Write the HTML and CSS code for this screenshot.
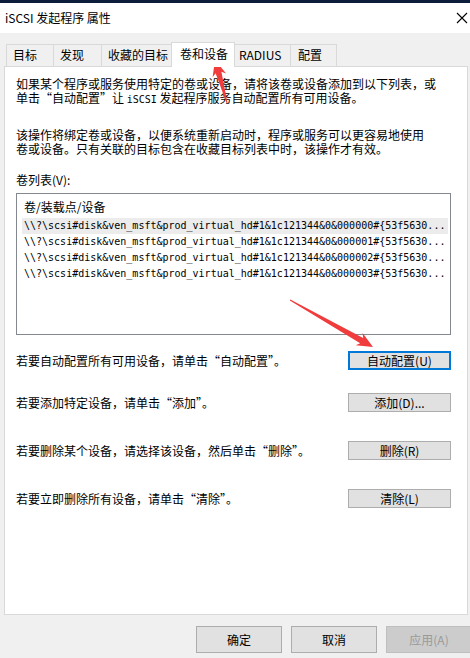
FILE: index.html
```html
<!DOCTYPE html>
<html lang="zh-CN">
<head>
    <meta charset="UTF-8">
    <title>iSCSI 发起程序 属性</title>
    <link rel="stylesheet" href="styles.css">
</head>
<body>
    <div class="window">
        <div class="topline"></div>
        <div class="titlebar">
            <span class="title">iSCSI 发起程序 属性</span>
            <svg class="close" width="12" height="12" viewBox="0 0 12 12">
                <path d="M1 1L11 11M11 1L1 11" stroke="#000" stroke-width="1.1" fill="none"/>
            </svg>
        </div>

        <div class="tabs">
            <div class="tab t1">目标</div>
            <div class="tab t2">发现</div>
            <div class="tab t3">收藏的目标</div>
            <div class="tab active">卷和设备</div>
            <div class="tab t5">RADIUS</div>
            <div class="tab t6">配置</div>
        </div>

        <div class="panel">
            <p class="para">如果某个程序或服务使用特定的卷或设备，请将该卷或设备添加到以下列表，或<br>单击“自动配置”让 <span class="mono">iSCSI</span> 发起程序服务自动配置所有可用设备。</p>
            <p class="para">该操作将绑定卷或设备，以便系统重新启动时，程序或服务可以更容易地使用<br>卷或设备。只有关联的目标包含在收藏目标列表中时，该操作才有效。</p>
            <div class="label">卷列表(V):</div>
            <div class="listbox">
                <div class="list-head">卷/装载点/设备</div>
                <div class="list-row selected">\\?\scsi#disk&amp;ven_msft&amp;prod_virtual_hd#1&amp;1c121344&amp;0&amp;000000#{53f5630...</div>
                <div class="list-row">\\?\scsi#disk&amp;ven_msft&amp;prod_virtual_hd#1&amp;1c121344&amp;0&amp;000001#{53f5630...</div>
                <div class="list-row">\\?\scsi#disk&amp;ven_msft&amp;prod_virtual_hd#1&amp;1c121344&amp;0&amp;000002#{53f5630...</div>
                <div class="list-row">\\?\scsi#disk&amp;ven_msft&amp;prod_virtual_hd#1&amp;1c121344&amp;0&amp;000003#{53f5630...</div>
            </div>

            <div class="action first">
                <span>若要自动配置所有可用设备，请单击“自动配置”。</span>
                <button class="btn focused">自动配置(U)</button>
            </div>
            <div class="action">
                <span>若要添加特定设备，请单击“添加”。</span>
                <button class="btn">添加(D)...</button>
            </div>
            <div class="action wide">
                <span>若要删除某个设备，请选择该设备，然后单击“删除”。</span>
                <button class="btn">删除(R)</button>
            </div>
            <div class="action wide">
                <span>若要立即删除所有设备，请单击“清除”。</span>
                <button class="btn">清除(L)</button>
            </div>
        </div>

        <div class="footer">
            <button class="dlg-btn">确定</button>
            <button class="dlg-btn">取消</button>
            <button class="dlg-btn disabled">应用(A)</button>
        </div>
    </div>

    <svg class="annot" width="470" height="658" viewBox="0 0 470 658">
        <polygon fill="#f03c3c" points="227.5,102.9 221.4,71.7 226.1,73.5 215,60 212.6,77.3 215.6,73.3 226.5,103.1"/>
        <polygon fill="#f03c3c" points="289.8,300.4 360.2,343.2 355.7,345.2 373,347 362.6,333 363.2,338 290.3,299.6"/>
    </svg>
</body>
</html>
```

FILE: styles.css
```css
body {
    margin: 0;
    padding: 0;
    background: #f0f0f0;
    font-family: "Noto Sans CJK SC", "Noto Sans", sans-serif;
    font-size: 12px;
    color: #000;
    overflow: hidden;
    width: 470px;
    height: 658px;
}
.window {
    width: 480px;
}
.topline {
    height: 3px;
    background: #0b1d3a;
}
.titlebar {
    height: 30px;
    background: #fff;
    display: flex;
    align-items: center;
    justify-content: space-between;
    padding: 0 2px 0 5px;
    width: 463px;
}
.title {
    font-size: 12px;
    line-height: 14px;
}
.tabs {
    display: flex;
    align-items: flex-end;
    padding-left: 6px;
    margin-top: 9px;
    height: 24px;
    position: relative;
    z-index: 1;
}
.tab {
    box-sizing: border-box;
    height: 22px;
    line-height: 20px;
    padding-left: 6px;
    border: 1px solid #d9d9d9;
    border-bottom: none;
    background: #f0f0f0;
    margin-right: -1px;
    white-space: nowrap;
}
.t1 { width: 48px; }
.t2 { width: 49px; }
.t3 { width: 73px; }
.t5 { width: 58px; padding-left: 5px; }
.t6 { width: 47px; padding-left: 7px; }
.tab.active {
    width: 64px;
    height: 25px;
    line-height: 22px;
    background: #fff;
    margin: 0 -2px -1px -2px;
    padding-left: 8px;
    position: relative;
    z-index: 2;
}
.panel {
    box-sizing: border-box;
    width: 464px;
    height: 549px;
    margin-left: 4px;
    background: #fff;
    border: 1px solid #d9d9d9;
    padding: 10px 0 0 11px;
}
.para {
    margin: 0 0 21px;
    line-height: 14px;
    white-space: nowrap;
}
.para + .para {
    margin-bottom: 17px;
}
.mono {
    font-family: "DejaVu Sans Mono", monospace;
    font-size: 10px;
}
.label {
    line-height: 14px;
    margin-bottom: 6px;
}
.listbox {
    box-sizing: border-box;
    width: 435px;
    height: 142px;
    border: 1px solid #828790;
    padding: 2px 2px 0 5px;
}
.list-head {
    height: 22px;
    line-height: 21px;
    padding-left: 2px;
}
.list-row {
    height: 16px;
    line-height: 16px;
    padding-left: 2px;
    font-family: "DejaVu Sans Mono", monospace;
    font-size: 10px;
    white-space: nowrap;
    overflow: hidden;
}
.list-row.selected {
    background: #ececec;
}
.action {
    display: flex;
    align-items: center;
    justify-content: space-between;
    width: 435px;
    height: 19px;
    margin-top: 23px;
}
.action.first {
    margin-top: 16px;
}
.action.wide {
    margin-top: 29px;
}
.btn {
    box-sizing: border-box;
    width: 103px;
    height: 19px;
    background: #e1e1e1;
    border: 1px solid #adadad;
    font-family: "Noto Sans CJK SC", sans-serif;
    font-size: 12px;
    line-height: 16px;
    padding: 0;
    color: #000;
}
.btn.focused {
    border: 2px solid #0078d7;
}
.footer {
    display: flex;
    gap: 9px;
    padding-left: 196px;
    margin-top: 11px;
}
.dlg-btn {
    box-sizing: border-box;
    width: 86px;
    height: 27px;
    background: #e1e1e1;
    border: 1px solid #adadad;
    font-family: "Noto Sans CJK SC", sans-serif;
    font-size: 12px;
    color: #000;
    padding: 0;
}
.dlg-btn.disabled {
    background: #cccccc;
    border-color: #bfbfbf;
    color: #9a9a9a;
}
.annot {
    position: absolute;
    top: 0;
    left: 0;
    pointer-events: none;
}
```
